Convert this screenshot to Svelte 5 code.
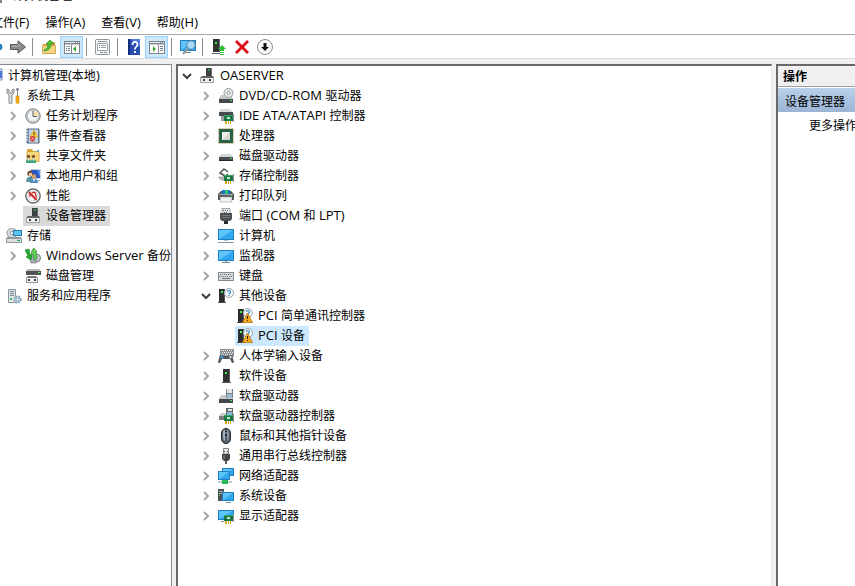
<script>
  const pcb = '<path d="M6 7h9v6H6z" fill="#1f7a4a"/><path d="M6 7h9v1H6z" fill="#37a568"/><path d="M9 9h3v2H9z" fill="#b9e8cd"/><path d="M7 11h1v1H7zM13 9h1v1h-1z" fill="#0f4c2b"/><path d="M15 6h1v8h-1z" fill="#8b9290"/><path d="M7 13h2v3H7zM10 13h1v3h-1zM12 13h1v3h-1z" fill="#e5a51b"/>';
  const screen = (x, y, w, h) =>
    `<rect x="${x}" y="${y}" width="${w}" height="${h}" fill="#1f7fc0"/><rect x="${x + 1}" y="${y + 1}" width="${w - 2}" height="${h - 2}" fill="#2fa8f0"/><path d="M${x + 1} ${y + h - 1}V${y + 1}H${x + w - 1}z" fill="#5fc3fb"/>`;
  const tower = '<path d="M1 1h6v13H1z" fill="#2c2d2e"/><path d="M6 1h1v13H6z" fill="#58595a"/><path d="M3 3h2v2H3z" fill="#3bea4c"/><path d="M0 14h8v1H0z" fill="#4a4b4c"/>';
  const drive = (y) =>
    `<path d="M3 ${y}h10l2 3H1z" fill="#d3d6d8"/><path d="M1 ${y + 3}h14v4H1z" fill="#4a4e51"/><path d="M1 ${y + 6}h14v1H1z" fill="#24282a"/><path d="M12 ${y + 4}h2v1h-2z" fill="#3eea58"/>`;
  const question = '<circle cx="11" cy="5" r="4.500" fill="#f4f9fc" stroke="#9aa6ae"/><path d="M9.500 4c0-2 3-2 3 0 0 1-1.500 1-1.500 2.300M11 7v1" fill="none" stroke="#2484bf" stroke-width="1.100"/>';
  const manager = '<path d="M7 0h6v8H7z" fill="#3e4143"/><path d="M12 0h1v8h-1z" fill="#6a6d6f"/><path d="M9 1h2v2H9z" fill="#2f9a49"/><path d="M3 8h11l1 2H1z" fill="#5f6365"/><path d="M1 10h14v5H1z" fill="#f1f2f2"/><path d="M1 14h14v1H1zM1 10h1v5H1zM14 10h1v5h-1z" fill="#a0a4a6"/><path d="M4 11h2v2H4zM10 11h2v2h-2z" fill="#34383a"/>';
  const pane = '<path d="M0 2h16v13H0z" fill="#7d868e"/><path d="M1 6h14v8H1z" fill="#fff"/><path d="M1 3h10v1H1z" fill="#e9eef2"/><path d="M12 3h1v1h-1zM14 3h1v1h-1z" fill="#fff"/><path d="M1 5h14v1H1z" fill="#c3cad0"/>';

  const icons = {
    manager,
    console: '<path d="M1 1h14v11H1z" fill="#e2e6ef" stroke="#7588b6"/><path d="M3 3h12v7H3z" fill="#4975d8"/><path d="M4 13h8v2H4z" fill="#8c949d"/>',
    tools: '<path d="M1 1v4l2 2v8c0 1.500 3 1.500 3 0V7l2-2V1L6 2v3H3V2z" fill="#dcdfe0" stroke="#7b8082" stroke-width=".9"/><path d="M10.500 0h2l.5 2-1 1v5h-1V3l-1-1z" fill="#85898c"/><path d="M10 8h3v6c0 2-3 2-3 0z" fill="#f5ab16" stroke="#d08500" stroke-width=".6"/>',
    clock: '<circle cx="8" cy="8" r="7.200" fill="#d8d9da" stroke="#777b7e"/><circle cx="8" cy="8" r="5.500" fill="#f2f5fa" stroke="#abb0b7" stroke-width=".7"/><path d="M8 8V2.500A5.500 5.500 0 0 1 13.500 8z" fill="#fbdca4"/><path d="M8 3v5.500h4" fill="none" stroke="#4f616f"/>',
    event: '<path d="M2 1h12v14H2z" fill="#7a91ac" stroke="#52677f"/><path d="M4 1.500h9v13H4z" fill="#c4d3e3"/><path d="M1 3h2M1 6h2M1 9h2M1 12h2" stroke="#fff"/><path d="M9 2l4 7H5z" fill="#ffd42c" stroke="#c89c00" stroke-width=".5"/><path d="M9 4v3M9 7.500v1" stroke="#333"/><path d="M5 9l1.500-1h2L10 9v3l-1.500 1.500h-2L5 12z" fill="#d93b3a"/><path d="M6.500 9.500l2 2m0-2l-2 2" stroke="#fff" stroke-width=".8"/>',
    share: '<path d="M2 3V1h5l1 2h6v3H2z" fill="#d9a63b"/><path d="M2 3.500h12v10H2z" fill="#f7d778" stroke="#cb9a33" stroke-width=".8"/><path d="M12 2h2v2h-2z" fill="#5bb1e6"/><circle cx="3.500" cy="8.500" r="1.700" fill="#7b5533"/><circle cx="8.500" cy="8.500" r="1.700" fill="#7b5533"/><path d="M1 14c0-4 5-4 5 0v1H1zM6 14c0-4 5-4 5 0v1H6z" fill="#3da580"/><path d="M2.500 10.500h2l-1 3zM7.500 10.500h2l-1 3z" fill="#e9f5ee"/>',
    users: '<path d="M5 1h11v10H5z" fill="#c8d4e2"/><path d="M6 2h9v8H6z" fill="#2857ca"/><path d="M12 2h3v7z" fill="#608de8"/><path d="M11 12h4v1h-4z" fill="#a4abb4"/><circle cx="5" cy="5.500" r="2.700" fill="#6d4e37"/><path d="M4 5h3v3H4z" fill="#efc197"/><path d="M1 14c0-7 7-7 7 0z" fill="#5b95a3"/><circle cx="9" cy="8.500" r="2.300" fill="#d4a15a"/><path d="M5 15c0-6 8-6 8 0z" fill="#4f86bc"/><path d="M8 11h2l-1 3z" fill="#fff"/>',
    perf: '<circle cx="8" cy="8" r="7.100" fill="#fff" stroke="#6a6d6f" stroke-width="1.500"/><circle cx="8" cy="8" r="5" fill="#fff" stroke="#c4c7c9" stroke-width=".7"/><path d="M4 4l7.500 8" fill="none" stroke="#cb2a29" stroke-width="2"/><path d="M5 9V6M7 4.500h3l1.500 5" fill="none" stroke="#cb2a29" stroke-width="1.300"/>',
    storage: '<circle cx="6" cy="5" r="5" fill="#d8dadb" stroke="#90989c"/><circle cx="6" cy="5" r="1.600" fill="#fff" stroke="#8e989e"/><path d="M7 2h9v6H7z" fill="#1d7db8"/><path d="M8 3h7v4H8z" fill="#5cc3ed"/><path d="M1 9h14l1 2v4H0v-4z" fill="#8f999d"/><path d="M1 11h14v3H1z" fill="#dce0e1"/><path d="M11 12h3v1h-3z" fill="#16bd4d"/>',
    backup: '<circle cx="11.500" cy="10" r="4" fill="#c7cbd0" stroke="#737a81"/><circle cx="11.500" cy="10" r="1.200" fill="#fff" stroke="#81878c" stroke-width=".6"/><path d="M4 8h7v7H6z" fill="#a5abb0" stroke="#666d73" stroke-width=".6"/><path d="M0 2l4-1 1 6 2-1-1 6-5-3 2-1z" fill="#26ac33" stroke="#11801e" stroke-width=".6"/><path d="M7 2l2-2 3 4h-1l1 6-3 2-1-6-2 1z" fill="#62cd51" stroke="#238d2a" stroke-width=".6"/>',
    disks: '<path d="M3 1h11l2 2H1z" fill="#b5b9bb"/><path d="M1 3h15v4H1z" fill="#505457"/><path d="M13 4h2v1h-2z" fill="#43e95b"/><path d="M3 8h8l2 2H1z" fill="#74787b"/><path d="M1 10h12v5H1z" fill="#f0f1f1"/><path d="M1 14h12v1H1zM1 10h1v5H1zM12 10h1v5h-1z" fill="#94989b"/><path d="M3 11h2v2H3zM9 11h2v2H9z" fill="#45494b"/>',
    services: '<path d="M2.500 1.500h7v13h-7z" fill="#e2e6e9" stroke="#8a969e"/><path d="M4 3.500h4M4 5.500h4M4 7.500h4" stroke="#76858f"/><path d="M4 10h2v2H4z" fill="#34b75c"/><circle cx="11.500" cy="11.500" r="3.300" fill="#c2d6e6" stroke="#7f9fb8" stroke-width="1.600" stroke-dasharray="1.700 1"/><circle cx="11.500" cy="11.500" r="1.400" fill="#fff" stroke="#6485a0" stroke-width=".7"/>',
    dvd: '<path d="M3 7h10l2 4H1z" fill="#c5c8ca"/><circle cx="10.500" cy="5" r="4.500" fill="#e5e7e8" stroke="#9a9ea1"/><circle cx="10.500" cy="5" r="1.500" fill="#fff" stroke="#9a9ea1"/><path d="M1 11h14v4H1z" fill="#44484a"/><path d="M12 12h2v1h-2z" fill="#3cea5b"/>',
    ide: '<path d="M3 1h9l3 3H1z" fill="#d6d8da"/><path d="M1 4h14v4H1z" fill="#474b4e"/><path d="M3 8h3v5H3z" fill="#969c9f"/>' + pcb,
    cpu: '<rect x=".5" y=".5" width="15" height="15" fill="none" stroke="#b6a05e" stroke-dasharray="1 1"/><path d="M1 1h14v14H1z" fill="#2b6049"/><path d="M4 4h8v8H4z" fill="#d3d7d4"/><path d="M4 12V4h8z" fill="#edefed"/>',
    hdd: drive(6),
    storagectl: '<path d="M7 8L2 5l4-4 4 3M3 5l4 3 3-2M1 9l4 3" fill="none" stroke="#55585a" stroke-width="1.500"/><path d="M2 9l3-1 2 1v4H5l-4-2z" fill="#b2b6b8"/>' + pcb,
    printer: '<path d="M0 6l3-3h10l3 3v6h-2V9H2v3H0z" fill="#55595c"/><path d="M4 2h8v4H4z" fill="#1678d3"/><path d="M7 2h3v4H7z" fill="#2fc36f"/><path d="M1 6h14v1H1z" fill="#a6aaac"/><path d="M3 9h10l1 5H2z" fill="#eef0f2" stroke="#9ba1a5" stroke-width=".6"/><path d="M13 7h1v1h-1z" fill="#4ae65a"/>',
    port: '<path d="M4 .5h8v5H4z" fill="#e6e8e9" stroke="#898d90" stroke-width=".8"/><path d="M5 2h1v1H5zM7 2h1v1H7zM9 2h1v1H9zM6 4h1v1H6zM8 4h1v1H8z" fill="#55595b"/><path d="M2 5h12v6l-2 2H4l-2-2z" fill="#4d5052"/><path d="M4 7.500h8M4 9.500h8" stroke="#74787a"/><path d="M6 13h4v3H6z" fill="#2a2d2e"/>',
    computer: screen(0, 1, 16, 11) + '<path d="M6 12h4v1H6z" fill="#b7c7d1"/><path d="M0 14h16v1H0z" fill="#7e9cad"/>',
    monitor: screen(0, 2, 16, 11) + '<path d="M7 13h2v1H7z" fill="#9eafb9"/><path d="M4 14h8v1H4z" fill="#718b9b"/>',
    keyboard: '<path d="M0 4h16v9H0z" fill="#858a8e"/><path d="M1 5h14v7H1z" fill="#d6d9db"/><path d="M2 6.500h12M1 8.500h14" stroke="#71767a" stroke-dasharray="1 1"/><path d="M4 10.500h8" stroke="#71767a"/>',
    other: tower + question,
    warning: tower + question + '<path d="M10.500 5l5 9.500h-10z" fill="#f8a91d" stroke="#b57311" stroke-width=".8"/><path d="M10 8h1v3h-1zM10 12h1v1h-1z" fill="#2a2416"/>',
    hid: '<path d="M2 1h14v8H2z" fill="#8b9093"/><path d="M3 2.500h12M4 4.500h11M3 6.500h12" stroke="#f2f3f4" stroke-dasharray="1 1"/><path d="M0 14l2-7h3l1 1h4l1-1h3l2 7-1 1h-1l-2-4H4l-2 4H1z" fill="#54595e"/><circle cx="4" cy="9" r="1.500" fill="#409cde"/><path d="M11 9h3M12.500 7.500v3" stroke="#d6d9db"/>',
    software: '<path d="M5 1h7v13H5z" fill="#303132"/><path d="M11 1h1v13h-1z" fill="#5c5e60"/><path d="M7 4h2v2H7z" fill="#38e94c"/><path d="M4 14h9v1H4z" fill="#545658"/>',
    floppy: '<path d="M3 7h10l2 4H1z" fill="#cacdd0"/><path d="M8 1h7v9H8z" fill="#7b848b"/><path d="M9 1h5v4H9z" fill="#e4e7e9"/><path d="M9 6h5v4H9z" fill="#9abbd2"/><path d="M1 11h14v4H1z" fill="#44484a"/><path d="M12 12h2v1h-2z" fill="#3cea5b"/>',
    floppyctl: '<path d="M3 5h6v3H1z" fill="#cacdd0"/><path d="M8 0h7v8H8z" fill="#626a70"/><path d="M10 1h4v2h-4z" fill="#e4e7e9"/><path d="M9 4h5v3H9z" fill="#8ab9da"/><path d="M1 8h6v4H1z" fill="#777c7f"/>' + pcb,
    mouse: '<rect x="3.500" y=".5" width="9" height="15" rx="4.500" fill="#565d66" stroke="#262b31"/><path d="M5 5c0-4 2-3 2-3v11c-2-1-2-4-2-8z" fill="#aab2bd"/><path d="M11 5c0-4-2-3-2-3v11c2-1 2-4 2-8z" fill="#8a94a1"/><path d="M7 3h2v5H7z" fill="#1f262d"/><path d="M7.500 4h1v2h-1z" fill="#9fc5e9"/>',
    usb: '<path d="M5.500.5h5V6h-5z" fill="#e3e5e6" stroke="#808487"/><path d="M6 3h1v1H6zM9 3h1v1H9z" fill="#444"/><path d="M4 6h8v5l-2 2H6l-2-2z" fill="#424547"/><path d="M5 7h2v4H5z" fill="#65696b"/><path d="M7 13h2v3H7z" fill="#55595b"/>',
    network: screen(4, 0, 12, 8) + '<path d="M0 3h12v9H0z" fill="#fff"/>' + screen(0, 3, 12, 9) + '<path d="M0 13h14v2H0z" fill="#c4d3ca"/><path d="M4 12h6v4H4z" fill="#26bb57"/>',
    system: '<path d="M0 1h6v12H0z" fill="#4c5155"/><path d="M1 3.500h4M1 5.500h4" stroke="#aab0b4"/><path d="M1 7h1v1H1z" fill="#3de957"/>' + screen(4, 4, 12, 9) + '<path d="M8 14h5v1H8z" fill="#718b9b"/>',
    display: screen(0, 2, 16, 10) + '<path d="M3 13h3v1H3z" fill="#718b9b"/>' + pcb,
    back: '<path d="M5 5h7q3 0 3 3t-3 3H5z" fill="#2189d3" stroke="#176aa8"/>',
    forward: '<path d="M.5 5.500H8V1.800l7.500 6.200L8 14.200v-3.700H.5z" fill="#8a8d8f" stroke="#55585a"/><path d="M2 7h7V4.500" fill="none" stroke="#b5b7b8"/>',
    folderup: '<path d="M2 5h5l1-2h6v12H2z" fill="#d9a644"/><path d="M1.500 6.500h13v8h-13z" fill="#f5d584" stroke="#c99c3f" stroke-width=".8"/><path d="M3 11c3-1 4-3 4-6H5l4-4 4 4h-3c0 5-3 7-7 7z" fill="#53bf35" stroke="#2e9221" stroke-width=".7"/>',
    tree: pane + '<path d="M2 7h1v1H2zM2 9h1v1H2zM2 11h1v1H2zM4 7h2v1H4zM4 9h2v1H4zM4 11h2v1H4z" fill="#6a7e90"/><path d="M7 6h1v8H7z" fill="#7d868e"/><path d="M12 7v6L9 10z" fill="#36a92f"/>',
    actions: pane + '<path d="M9 6h1v8H9z" fill="#7d868e"/><path d="M11 7h3v1h-3zM11 9h3v1h-3zM11 11h3v1h-3z" fill="#6a7e90"/><path d="M4 7v6l3-3z" fill="#36a92f"/>',
    props: '<rect x=".5" y=".5" width="14" height="15" rx="1" fill="#f5f6f7" stroke="#8e9498"/><path d="M3 2.500h9" stroke="#90979c"/><path d="M2.500 4.500h10v7h-10z" fill="#fff" stroke="#9ba2a7"/><path d="M4 6.500h1M4 8.500h1" stroke="#4176aa"/><path d="M6 6.500h5M6 8.500h5" stroke="#969da2"/><path d="M5 13.500h3M9 13.500h3" stroke="#858c91"/>',
    help: '<path d="M2 0h12v16H2z" fill="#284bb0"/><path d="M2 0h2v16H2z" fill="#142f80"/><path d="M4 0h10v8z" fill="#5179d8"/><path d="M6.500 6c0-4 5-4 5-.5C11.500 8 9 7.500 9 10.500" fill="none" stroke="#fff" stroke-width="1.700"/><path d="M8 12h2v2H8z" fill="#fff"/>',
    scan: screen(0, 1, 16, 11) + '<path d="M3 13h8v1H3z" fill="#718b9b"/><path d="M8 9l-5 6" stroke="#8d9ba4" stroke-width="2"/><circle cx="11" cy="6" r="4.200" fill="#a5dcfa" stroke="#607e92"/>',
    update: '<path d="M2 0h7v13H2z" fill="#303234"/><path d="M8 0h1v13H8z" fill="#65686a"/><path d="M4 3h2v2H4z" fill="#38e94c"/><path d="M1 14h8v1H1z" fill="#55585a"/><path d="M11 6l4 4h-2v2H9v-2H7zM9 13h4v1H9zM9 15h4v1H9z" fill="#2fbd37"/>',
    remove: '<path d="M1 3l2-2 5 5 5-5 2 2-5 5 5 5-2 2-5-5-5 5-2-2 5-5z" fill="#dc1118"/>',
    disable: '<circle cx="8" cy="8" r="7.500" fill="#fafafa" stroke="#8e8e8e"/><path d="M6.500 4h3v4H12l-4 4-4-4h2.500z" fill="#111"/>'
  };

  const left = [
    [0, '', 'console', '计算机管理(本地)'],
    [1, '', 'tools', '系统工具'],
    [2, 'closed', 'clock', '任务计划程序'],
    [2, 'closed', 'event', '事件查看器'],
    [2, 'closed', 'share', '共享文件夹'],
    [2, 'closed', 'users', '本地用户和组'],
    [2, 'closed', 'perf', '性能'],
    [2, '', 'manager', '设备管理器', 'muted'],
    [1, '', 'storage', '存储'],
    [2, 'closed', 'backup', 'Windows Server 备份'],
    [2, '', 'disks', '磁盘管理'],
    [1, '', 'services', '服务和应用程序']
  ];
  const devices = [
    [0, 'open', 'manager', 'OASERVER'],
    [1, 'closed', 'dvd', 'DVD/CD-ROM 驱动器'],
    [1, 'closed', 'ide', 'IDE ATA/ATAPI 控制器'],
    [1, 'closed', 'cpu', '处理器'],
    [1, 'closed', 'hdd', '磁盘驱动器'],
    [1, 'closed', 'storagectl', '存储控制器'],
    [1, 'closed', 'printer', '打印队列'],
    [1, 'closed', 'port', '端口 (COM 和 LPT)'],
    [1, 'closed', 'computer', '计算机'],
    [1, 'closed', 'monitor', '监视器'],
    [1, 'closed', 'keyboard', '键盘'],
    [1, 'open', 'other', '其他设备'],
    [2, '', 'warning', 'PCI 简单通讯控制器'],
    [2, '', 'warning', 'PCI 设备', 'active'],
    [1, 'closed', 'hid', '人体学输入设备'],
    [1, 'closed', 'software', '软件设备'],
    [1, 'closed', 'floppy', '软盘驱动器'],
    [1, 'closed', 'floppyctl', '软盘驱动器控制器'],
    [1, 'closed', 'mouse', '鼠标和其他指针设备'],
    [1, 'closed', 'usb', '通用串行总线控制器'],
    [1, 'closed', 'network', '网络适配器'],
    [1, 'closed', 'system', '系统设备'],
    [1, 'closed', 'display', '显示适配器']
  ];
  const menus = ['文件(F)', '操作(A)', '查看(V)', '帮助(H)'];
  const tools = [
    ['back', '后退'], ['forward', '前进'], null,
    ['folderup', '向上一级'], ['tree', '显示/隐藏控制台树', true], null,
    ['props', '属性'], null,
    ['help', '帮助'], ['actions', '显示/隐藏操作窗格', true], null,
    ['scan', '扫描检测硬件改动'], null,
    ['update', '更新驱动程序'], ['remove', '卸载设备'], ['disable', '禁用设备']
  ];
  const runs = (text) => text.match(/[\u4e00-\u9fff]+|[^\u4e00-\u9fff]+/g);
</script>

{#snippet icon(name)}
  <svg class="icon" viewBox="0 0 16 16" aria-hidden="true">{@html icons[name]}</svg>
{/snippet}

{#snippet label(text)}
  <span class="label">{#each runs(text) as run}<span class:latin={!/[\u4e00-\u9fff]/.test(run)}>{run}</span>{/each}</span>
{/snippet}

{#snippet tree(rows)}
  <ul class="tree">
    {#each rows as [level, state, name, text, mark]}
      <li class="row level{level}">
        {#if state}
          <button class="toggle" aria-label={text} aria-expanded={state === 'open'}>
            <svg class="chevron {state}" viewBox="0 0 10 10" aria-hidden="true">
              <path d={state === 'open' ? 'M1 3l4 4 4-4' : 'M3 1l4 4-4 4'} />
            </svg>
          </button>
        {:else}
          <span class="toggle"></span>
        {/if}
        <button class="item {mark ?? ''}">{@render icon(name)}{@render label(text)}</button>
      </li>
    {/each}
  </ul>
{/snippet}

<div class="window">
  <header class="title"><i></i><span>计算机管理</span></header>
  <nav class="menu">
    {#each menus as m}<button>{@render label(m)}</button>{/each}
  </nav>
  <div class="toolbar">
    {#each tools as t}
      {#if t}
        <button class="tool" class:on={t[2]} aria-label={t[1]}>{@render icon(t[0])}</button>
      {:else}
        <span class="sep"></span>
      {/if}
    {/each}
  </div>
  <main>
    <aside class="left">{@render tree(left)}</aside>
    <section class="center">{@render tree(devices)}</section>
    <aside class="right">
      <h2>操作</h2>
      <button class="group">设备管理器</button>
      <button class="more">更多操作</button>
    </aside>
  </main>
</div>

<style>
  :global(body) { margin: 0; background: #f0f0f0; }
  .window {
    display: flex;
    flex-direction: column;
    min-height: 100vh;
    overflow: hidden;
    background: #f0f0f0;
    color: #000;
    font: 12px/20px "Noto Sans CJK SC", sans-serif;
    white-space: nowrap;
  }
  button {
    margin: 0;
    padding: 0;
    border: 0;
    background: none;
    color: inherit;
    font: inherit;
    text-align: left;
  }
  .latin { font-family: "Open Sans", "Noto Sans CJK SC", sans-serif; font-size: 13px; white-space: pre; }
  .icon { display: block; flex: none; width: 16px; height: 16px; }

  .title {
    display: flex;
    align-items: flex-end;
    gap: 10px;
    height: 8px;
    overflow: hidden;
    background: #fff;
  }
  .title i { width: 2px; height: 8px; margin-bottom: 5px; background: #7d868e; }
  .title span { margin-bottom: 3px; }
  .menu { display: flex; align-items: center; height: 26px; margin-left: -17px; padding-top: 1px; box-sizing: border-box; background: #fff; box-shadow: -17px 0 #fff; }
  .menu button { padding: 0 8px; }
  .toolbar {
    display: flex;
    align-items: center;
    height: 22px;
    padding-top: 1px;
    border-top: 1px solid #a6a6a6;
    border-bottom: 1px solid #dcdcdc;
    background: #fff;
  }
  .tool { display: flex; flex: none; align-items: center; justify-content: center; width: 23px; height: 22px; }
  .tool:first-child { margin-left: -17px; }
  .tool.on { box-sizing: border-box; border: 1px solid #99d1ff; background: #cce8ff; }
  .sep { width: 1px; height: 18px; margin: 0 4px 0 3px; background: #8d8d8d; }

  main { display: flex; flex: 1; gap: 4px; padding-top: 5px; }
  .left, .center, .right { box-sizing: border-box; overflow: hidden; background: #fff; }
  .left { flex: none; width: 172px; padding-top: 1px; border-top: 1px solid #828790; border-right: 1px solid #828790; }
  .left .tree { margin-left: -32px; }
  .center { flex: 1; padding-left: 2px; border: solid #696969; border-width: 2px 0 0 2px; border-right: 1px solid #e3e3e3; }
  .right { flex: none; width: 79px; border: solid #696969; border-width: 2px 0 0 2px; }

  .tree { margin: 0; padding: 0; list-style: none; }
  .row { display: flex; height: 20px; }
  .level1 { padding-left: 19px; }
  .level2 { padding-left: 38px; }
  .toggle { display: flex; flex: none; align-items: center; justify-content: center; width: 14px; margin-right: 3px; }
  .chevron { width: 10px; height: 10px; fill: none; stroke: #a6a6a6; stroke-width: 2; }
  .chevron.open { stroke: #404040; }
  .item { display: flex; align-items: center; gap: 5px; height: 20px; padding: 0 4px 0 2px; }
  .item .label { padding-bottom: 2px; }
  .item.muted { background: #d9d9d9; }
  .item.active { background: #cce8ff; }

  h2 { margin: 0; padding-left: 5px; border-bottom: 1px solid #a0a0a0; background: #f0f0f0; font-size: 12px; line-height: 20px; }
  .group, .more { display: block; width: 100%; height: 25px; line-height: 25px; }
  .group { padding-left: 7px; border-top: 1px solid #fff; background: linear-gradient(#b9d1ea, #9cb5d5); }
  .more { padding-left: 31px; }
</style>
